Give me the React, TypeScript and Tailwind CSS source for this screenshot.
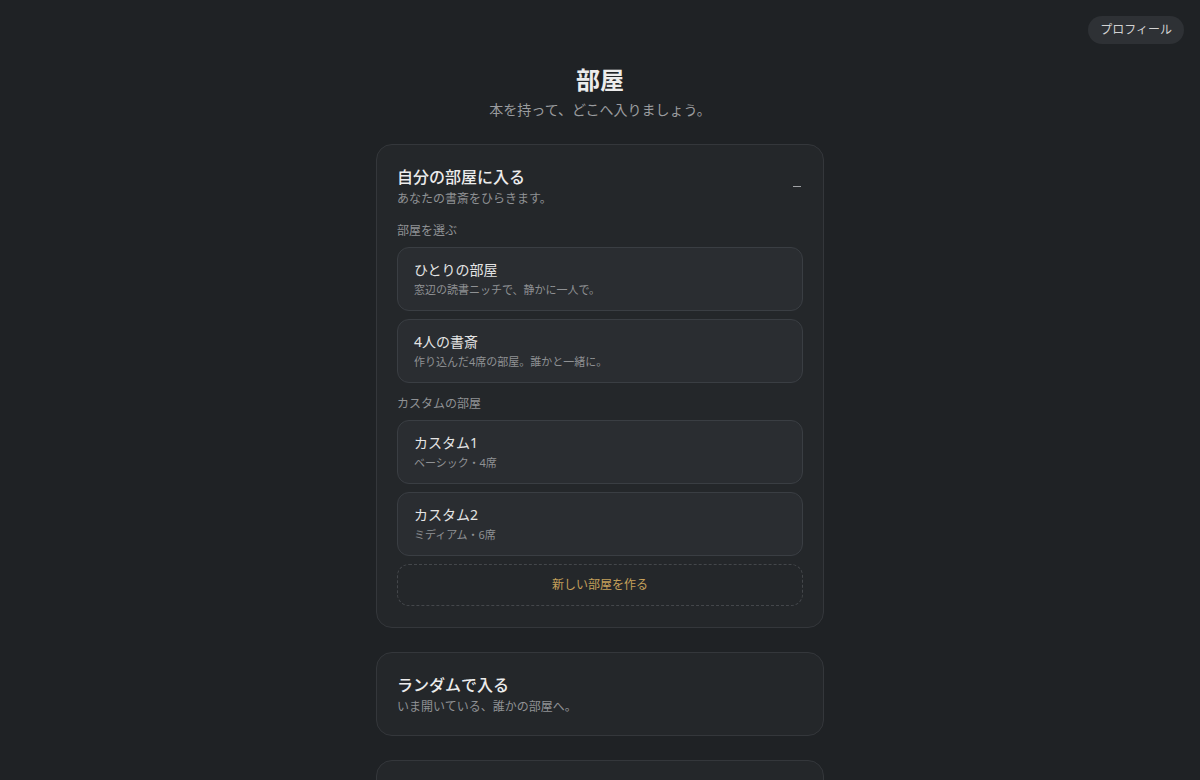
import React from "react";

type Room = { name: string; desc: string };

const presetRooms: Room[] = [
  { name: "ひとりの部屋", desc: "窓辺の読書ニッチで、静かに一人で。" },
  { name: "4人の書斎", desc: "作り込んだ4席の部屋。誰かと一緒に。" },
];

const customRooms: Room[] = [
  { name: "カスタム1", desc: "ベーシック・4席" },
  { name: "カスタム2", desc: "ミディアム・6席" },
];

function RoomItem({ room }: { room: Room }) {
  return (
    <button className="block w-full text-left rounded-xl border border-[#3a3e43] bg-[#2a2d31] px-4 py-3 hover:bg-[#2f3236]">
      <div className="text-sm leading-5 text-[#e4e4e4]">{room.name}</div>
      <div className="mt-0.5 text-[11px] leading-4 text-[#8f9194]">{room.desc}</div>
    </button>
  );
}

function SectionLabel({ children, className }: { children: React.ReactNode; className?: string }) {
  return <div className={`text-xs leading-4 text-[#8f9194] mb-2 ${className ?? ""}`}>{children}</div>;
}

function CardHeader({ title, subtitle, open }: { title: string; subtitle: string; open?: boolean }) {
  return (
    <div className="flex items-center justify-between">
      <div>
        <h2 className="text-base leading-6 font-medium text-[#ececec]">{title}</h2>
        <p className="mt-px text-xs leading-[18px] text-[#8f9194]">{subtitle}</p>
      </div>
      {open && <span className="mr-0.5 block h-px w-2 bg-[#a0a2a5]" />}
    </div>
  );
}

export default function App() {
  return (
    <div
      className="relative min-h-screen bg-[#1f2225] text-[#e6e6e6]"
      style={{ fontFamily: "'Noto Sans', 'Noto Sans CJK JP', sans-serif" }}
    >
      <button className="absolute top-4 right-4 h-7 rounded-full bg-[#2e3135] px-3 text-xs text-[#d2d2d2]">
        プロフィール
      </button>

      <div className="mx-auto w-[448px] pt-16 pb-10">
        <header className="text-center mb-6">
          <h1 className="text-2xl leading-8 font-bold text-[#ececec]">部屋</h1>
          <p className="mt-1 text-sm leading-5 text-[#9a9c9f]">本を持って、どこへ入りましょう。</p>
        </header>

        <div className="flex flex-col gap-6">
          <section className="rounded-2xl border border-[#34373b] bg-[#24272a] px-5 pt-5 pb-[21px]">
            <CardHeader title="自分の部屋に入る" subtitle="あなたの書斎をひらきます。" open />

            <SectionLabel className="mt-[15px]">部屋を選ぶ</SectionLabel>
            <div className="space-y-2">
              {presetRooms.map((r) => (
                <RoomItem key={r.name} room={r} />
              ))}
            </div>

            <SectionLabel className="mt-[13px]">カスタムの部屋</SectionLabel>
            <div className="space-y-2">
              {customRooms.map((r) => (
                <RoomItem key={r.name} room={r} />
              ))}
              <button className="block w-full rounded-xl border border-dashed border-[#44474b] py-3 text-center text-xs leading-4 text-[#c5a05a]">
                新しい部屋を作る
              </button>
            </div>
          </section>

          <section className="rounded-2xl border border-[#34373b] bg-[#24272a] px-5 pt-5 pb-[19px]">
            <CardHeader title="ランダムで入る" subtitle="いま開いている、誰かの部屋へ。" />
          </section>

          <section className="rounded-2xl border border-[#34373b] bg-[#24272a] p-5">
            <CardHeader title="友だちの部屋に入る" subtitle="招待コードで、友だちの書斎へ。" />
          </section>
        </div>
      </div>
    </div>
  );
}
